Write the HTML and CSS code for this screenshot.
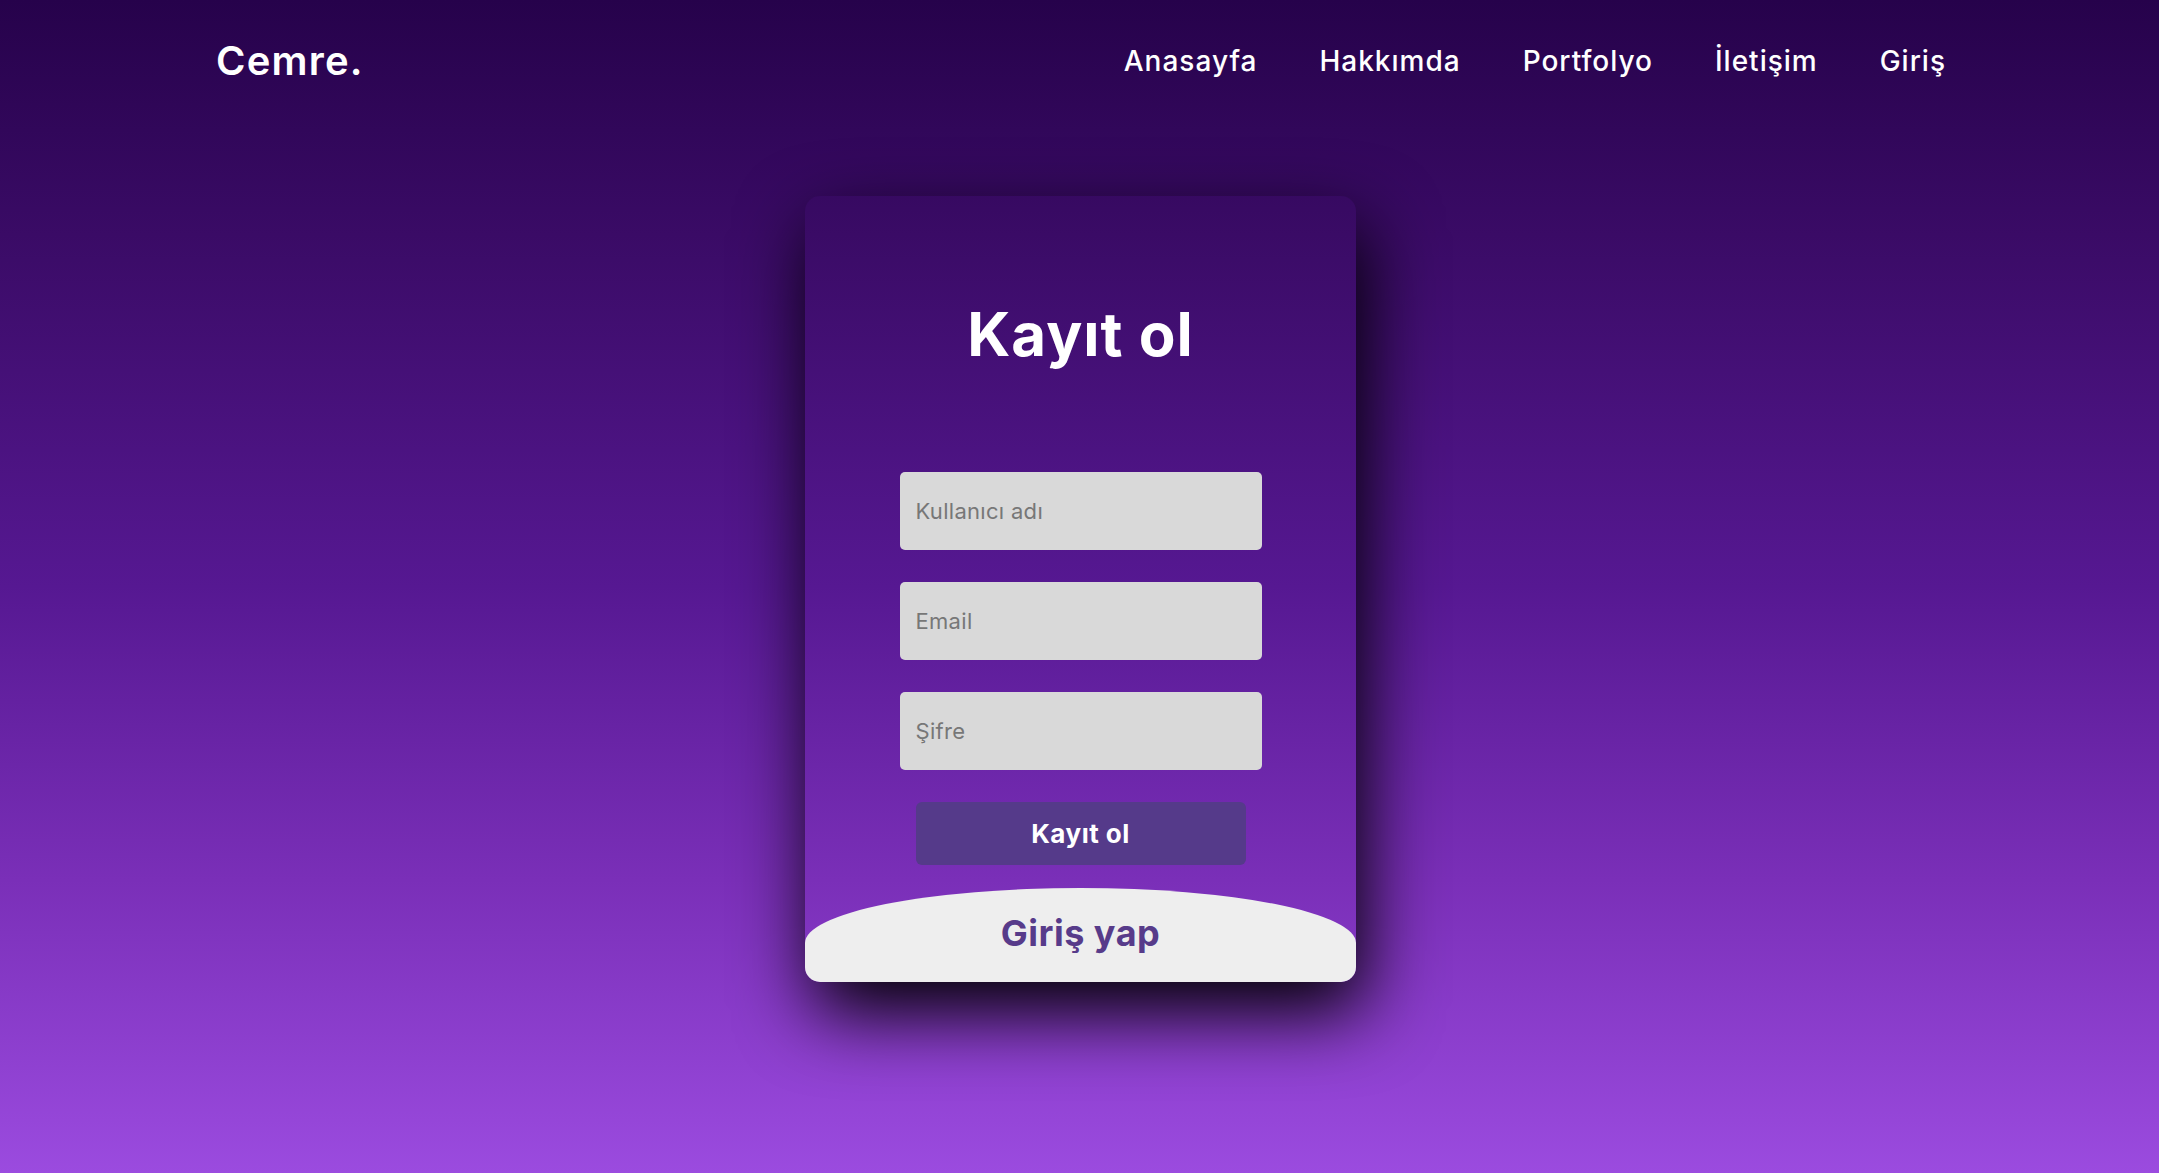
FILE: index.html
```html
<!DOCTYPE html>
<html lang="tr">
<head>
<meta charset="utf-8">
<title>Kayıt ol</title>
<link rel="stylesheet" href="styles.css">
</head>
<body>
<header class="topbar">
  <a class="logo" href="#">Cemre.</a>
  <nav class="menu">
    <a href="#">Anasayfa</a>
    <a href="#">Hakkımda</a>
    <a href="#">Portfolyo</a>
    <a href="#">İletişim</a>
    <a href="#">Giriş</a>
  </nav>
</header>
<main class="stage">
  <section class="card">
    <form class="signup">
      <h1 class="title">Kayıt ol</h1>
      <input class="field" type="text" placeholder="Kullanıcı adı">
      <input class="field" type="email" placeholder="Email">
      <input class="field" type="password" placeholder="Şifre">
      <button class="submit" type="button">Kayıt ol</button>
    </form>
    <div class="login"><span class="login-label">Giriş yap</span></div>
  </section>
</main>
</body>
</html>
```

FILE: styles.css
```css
* {
  box-sizing: border-box;
}

html,
body {
  height: 100%;
}

body {
  margin: 0;
  font-family: Inter, "Noto Sans", sans-serif;
  background: linear-gradient(to bottom, #26024b 0%, #3a0b66 20%, #561892 50%, #7a2fb8 75%, #9b4bdf 100%);
  color: #fff;
}

.topbar {
  height: 121px;
  padding: 0 213px 0 216px;
  display: flex;
  align-items: center;
  justify-content: space-between;
}

.logo {
  color: #fff;
  text-decoration: none;
  font-weight: 600;
  font-size: 40px;
  letter-spacing: 1.2px;
  line-height: 1;
}

.menu {
  display: flex;
  gap: 62px;
}

.menu a {
  color: #fff;
  text-decoration: none;
  font-weight: 500;
  font-size: 28px;
  letter-spacing: 1px;
  line-height: 1;
}

.stage {
  display: flex;
  justify-content: center;
  padding-top: 75px;
  padding-left: 2px;
}

.card {
  width: 551px;
  height: 786px;
  border-radius: 15px;
  overflow: hidden;
  box-shadow: 8px 30px 75px #000;
  display: flex;
  flex-direction: column;
}

.signup {
  display: flex;
  flex-direction: column;
  align-items: center;
  margin: 0;
}

.title {
  margin: 108px 0 108px;
  font-size: 60px;
  font-weight: 700;
  letter-spacing: 1px;
  line-height: 1;
}

.field {
  width: 362px;
  height: 78px;
  margin-bottom: 32px;
  padding: 0 16px;
  border: none;
  border-radius: 5px;
  background: #d9d9d9;
  font-family: inherit;
  font-size: 22px;
  letter-spacing: 0.3px;
  color: #333;
  outline: none;
}

.field::placeholder {
  color: #777;
}

.submit {
  width: 330px;
  height: 63px;
  border: none;
  border-radius: 6px;
  background: #553a8a;
  color: #fff;
  font-family: inherit;
  font-size: 26px;
  font-weight: 700;
  letter-spacing: 0.5px;
  cursor: pointer;
}

.login {
  flex: 1;
  margin-top: 23px;
  padding-top: 27px;
  background: #eeeeee;
  border-radius: 50% 50% 0 0 / 55px 55px 0 0;
  text-align: center;
}

.login-label {
  color: #573b8a;
  font-size: 36px;
  font-weight: 700;
  letter-spacing: 0.5px;
  line-height: 1;
}
```
